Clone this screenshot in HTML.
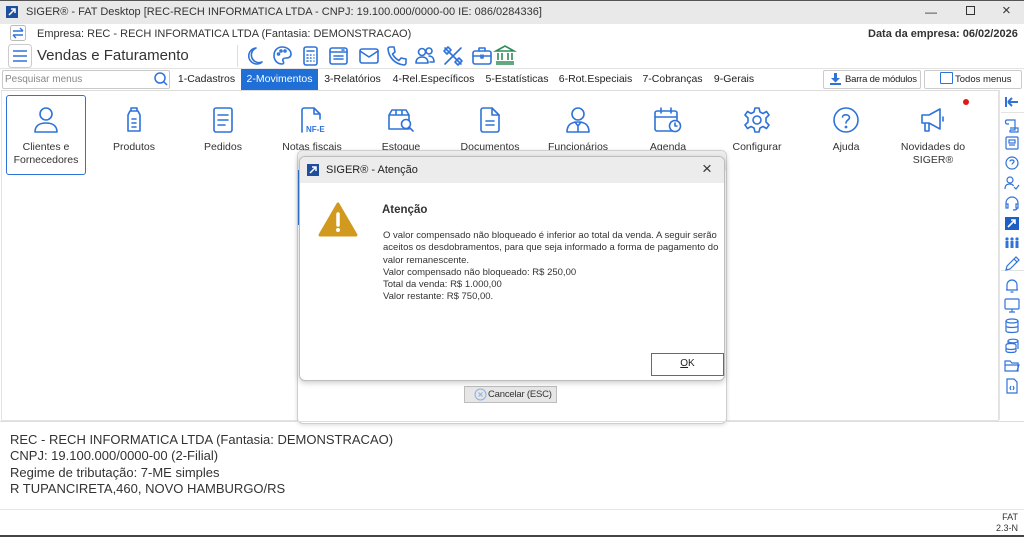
<!DOCTYPE html>
<html><head><meta charset="utf-8"><style>
*{box-sizing:border-box;margin:0;padding:0}
body{width:1024px;height:537px;overflow:hidden;background:#fff;font-family:"Liberation Sans","DejaVu Sans",sans-serif;color:#222;position:relative;font-size:11px}
.a{position:absolute;white-space:nowrap}
svg{overflow:visible}
.ic{fill:none;stroke:#2f73d9;stroke-width:1.6;stroke-linecap:round;stroke-linejoin:round}
.tab{position:absolute;top:69px;height:21px;line-height:21px;font-size:10.5px;color:#222;white-space:nowrap;text-align:center}
.mod{position:absolute;top:100px;width:80px;text-align:center;font-size:10.5px;color:#333;line-height:13px}
.mod svg{display:block;margin:0 auto 8px}
</style></head><body>
<div class="a" style="left:0;top:0;width:1024px;height:24px;background:#e9e9e9;border-top:1px solid #555"></div>
<div class="a" style="left:6px;top:6px;width:12px;height:12px;background:#1f4f9c"></div>
<svg class="a" style="left:8px;top:8px" width="8" height="8"><path d="M1 7L7 1M3 1H7V5" stroke="#fff" stroke-width="1.5" fill="none"/></svg>
<div class="a" style="left:26px;top:6px;font-size:11px;color:#333">SIGER® - FAT Desktop [REC-RECH INFORMATICA LTDA - CNPJ: 19.100.000/0000-00 IE: 086/0284336]</div>
<div class="a" style="left:925px;top:5px;font-size:12px;color:#333">—</div>
<div class="a" style="left:966px;top:6px;width:9px;height:9px;border:1px solid #333"></div>
<div class="a" style="left:1002px;top:2px;font-size:15px;color:#333">×</div>
<svg class="a" style="left:10px;top:25px" width="16" height="16"><rect x="0.5" y="0.5" width="15" height="15" rx="2" fill="#fff" stroke="#bbb"/><path d="M3 6H13M10 3L13 6M13 10H3M6 13L3 10" stroke="#2f73d9" stroke-width="1.4" fill="none"/></svg>
<div class="a" style="left:37px;top:28px;font-size:11px;color:#333">Empresa: REC - RECH INFORMATICA LTDA (Fantasia: DEMONSTRACAO)</div>
<div class="a" style="left:868px;top:28px;font-size:11px;font-weight:bold;color:#333">Data da empresa: 06/02/2026</div>
<svg class="a" style="left:8px;top:44px" width="24" height="24"><rect x="0.5" y="0.5" width="23" height="23" rx="3" fill="#fff" stroke="#ccc"/><path d="M5 7H19M5 12H19M5 17H19" stroke="#2f73d9" stroke-width="1.6"/></svg>
<div class="a" style="left:37px;top:47px;font-size:15px;color:#333">Vendas e Faturamento</div>
<div class="a" style="left:237px;top:45px;width:1px;height:22px;background:#ddd"></div>
<svg class="a ic" style="left:245px;top:46px" width="250" height="20">
<path d="M11 2A8 8 0 1 0 17 16A7 7 0 0 1 11 2Z"/>
<g transform="translate(28,0)"><path d="M9 1C4 1 1 5 1 9.5C1 14 4 18 9 18C11 18 11 16 10 15C9 13 11 12 13 12C16 12 18 11 18 8C18 4 14 1 9 1Z"/><circle cx="5.5" cy="8" r="1"/><circle cx="8" cy="5" r="1"/><circle cx="12" cy="5" r="1"/></g>
<g transform="translate(58,0)"><rect x="1" y="1" width="13" height="18" rx="2"/><path d="M4 5H11M4 9H5M7.5 9H8M11 9H11M4 12H5M7.5 12H8M11 12H11M4 15H5M7.5 15H8M11 15H11"/></g>
<g transform="translate(84,0)"><rect x="1" y="2" width="17" height="16" rx="2"/><path d="M1 6H18M5 10H14M5 13H14M13 4H15"/></g>
<g transform="translate(114,0)"><rect x="1" y="3" width="18" height="14" rx="2"/><path d="M1 5L10 11L19 5"/></g>
<g transform="translate(142,0)"><path d="M3 1L7 1L8 6L5.5 8C7 11 9 13 12 14.5L14 12L19 13L19 17C19 18 18 19 17 19C8 18 2 12 1 3C1 2 2 1 3 1Z"/></g>
<g transform="translate(170,0)"><circle cx="7" cy="6" r="3.5"/><path d="M1 17C1 13 3.5 11 7 11C10.5 11 13 13 13 17Z"/><circle cx="14" cy="5" r="3"/><path d="M14 10C17 10 19 12 19 16H15"/></g>
<g transform="translate(198,0)"><path d="M2 2L18 18M18 2L2 18"/><path d="M1 5L5 1L8 4L4 8ZM12 16L16 12L19 15L15 19Z"/></g>
<g transform="translate(227,0)"><rect x="1" y="5" width="18" height="13" rx="2"/><path d="M7 5V2H13V5M1 10H19M9 9V12H11V9"/></g>
</svg>
<svg class="a" style="left:495px;top:45px" width="20" height="20" fill="none" stroke="#2e8b57" stroke-width="1.6"><path d="M1 6L10 1L19 6ZM3 8V15M7 8V15M13 8V15M17 8V15M1 17H19M1 19H19"/></svg>
<div class="a" style="left:0;top:68px;width:1024px;height:1px;background:#e3e3e3"></div>
<div class="a" style="left:2px;top:70px;width:168px;height:19px;border:1px solid #c8c8c8;border-radius:2px;background:#fff"></div>
<div class="a" style="left:5px;top:74px;font-size:10px;color:#888">Pesquisar menus</div>
<svg class="a" style="left:154px;top:72px" width="14" height="14" fill="none" stroke="#2f73d9" stroke-width="1.5"><circle cx="6" cy="6" r="5"/><path d="M10 10L13 13"/></svg>
<div class="tab" style="left:172px;width:69px">1-Cadastros</div>
<div class="tab" style="left:241px;width:77px;background:#1f6fd6;color:#fff">2-Movimentos</div>
<div class="tab" style="left:318px;width:69px">3-Relatórios</div>
<div class="tab" style="left:387px;width:93px">4-Rel.Específicos</div>
<div class="tab" style="left:480px;width:74px">5-Estatísticas</div>
<div class="tab" style="left:554px;width:83px">6-Rot.Especiais</div>
<div class="tab" style="left:637px;width:71px">7-Cobranças</div>
<div class="tab" style="left:708px;width:52px">9-Gerais</div>
<div class="a" style="left:823px;top:70px;width:98px;height:19px;border:1px solid #ccc;border-radius:2px;font-size:9.5px;line-height:17px;padding-left:21px;color:#222;letter-spacing:-0.2px">Barra de módulos</div>
<svg class="a" style="left:830px;top:73px" width="11" height="12" fill="#2f73d9"><path d="M4 0H7V5H10L5.5 9.5L1 5H4ZM0 10H11V12H0Z"/></svg>
<div class="a" style="left:924px;top:70px;width:98px;height:19px;border:1px solid #ccc;border-radius:2px;font-size:9.5px;line-height:17px;padding-left:30px;color:#222">Todos menus</div>
<div class="a" style="left:940px;top:72px;width:13px;height:12px;border:1px solid #2f73d9;border-radius:1px"></div>
<div class="a" style="left:1px;top:90px;width:998px;height:331px;border:1px solid #e3e3e3;border-top:1px solid #ddd"></div>
<div class="a" style="left:6px;top:95px;width:80px;height:80px;border:1.5px solid #2f73d9;border-radius:3px"></div>
<div class="mod" style="left:6px;top:107px"><svg class="ic" width="24" height="26"><circle cx="12" cy="7" r="6"/><path d="M1 25C1 19 5 16 12 16C19 16 23 19 23 25Z"/></svg>Clientes e<br>Fornecedores</div>
<div class="mod" style="left:94px;top:107px"><svg class="ic" width="16" height="26"><path d="M5 1H11V4H5ZM4 4H12L14 8V24H2V8Z"/><path d="M6 12H10M6 16H10M6 20H10"/></svg>Produtos</div>
<div class="mod" style="left:183px;top:107px"><svg class="ic" width="20" height="26"><rect x="1" y="1" width="18" height="24" rx="2"/><path d="M5 8H15M5 13H15M5 18H12"/></svg>Pedidos</div>
<div class="mod" style="left:272px;top:107px"><svg class="ic" width="26" height="26"><path d="M3 25V3C3 2 4 1 5 1H15L21 7V12M15 1V7H21"/><text x="7" y="25" font-size="8" font-weight="bold" fill="#2f73d9" stroke="none" font-family="Liberation Sans">NF-E</text></svg>Notas fiscais</div>
<div class="mod" style="left:361px;top:107px"><svg class="ic" width="28" height="26"><path d="M2 8H22V22H2ZM2 8L5 3H19L22 8M9 3V8M15 3V8"/><circle cx="19" cy="17" r="4.5" fill="#fff"/><path d="M22 20L26 24"/></svg>Estoque</div>
<div class="mod" style="left:450px;top:107px"><svg class="ic" width="20" height="26"><path d="M1 3C1 2 2 1 3 1H12L19 8V23C19 24 18 25 17 25H3C2 25 1 24 1 23Z"/><path d="M12 1V8H19M6 14H14M6 18H14"/></svg>Documentos</div>
<div class="mod" style="left:538px;top:107px"><svg class="ic" width="26" height="26"><circle cx="13" cy="7" r="6"/><path d="M2 25C2 18 6 15 13 15C20 15 24 18 24 25ZM10 15L13 19L16 15M13 19V25"/></svg>Funcionários</div>
<div class="mod" style="left:628px;top:107px"><svg class="ic" width="28" height="26"><rect x="1" y="4" width="22" height="20" rx="2"/><path d="M1 10H23M7 1V6M17 1V6"/><circle cx="21" cy="19" r="5.5" fill="#fff"/><path d="M21 16V19H23"/></svg>Agenda</div>
<div class="mod" style="left:717px;top:107px"><svg class="ic" width="26" height="26"><path d="M11 1H15L16 5L19 6.5L22.5 4.5L25 8L22 11V15L25 18L22.5 21.5L19 19.5L16 21L15 25H11L10 21L7 19.5L3.5 21.5L1 18L4 15V11L1 8L3.5 4.5L7 6.5L10 5Z"/><circle cx="13" cy="13" r="4"/></svg>Configurar</div>
<div class="mod" style="left:806px;top:107px"><svg class="ic" width="26" height="26"><circle cx="13" cy="13" r="12"/><path d="M9.5 10C9.5 7 16.5 7 16.5 10.5C16.5 13 13 13 13 16"/><circle cx="13" cy="20" r="0.6"/></svg>Ajuda</div>
<div class="mod" style="left:893px;top:107px"><svg class="ic" width="26" height="26"><path d="M2 8H9L20 2V22L9 16H2ZM5 16V24H9V16M23 10V14"/></svg>Novidades do<br>SIGER®</div>
<div class="a" style="left:963px;top:99px;width:6px;height:6px;border-radius:50%;background:#e01818"></div>
<div class="a" style="left:999px;top:90px;width:1px;height:330px;background:#e3e3e3"></div>
<div class="a" style="left:1001px;top:112px;width:23px;height:1px;background:#e3e3e3"></div>
<div class="a" style="left:1001px;top:270px;width:23px;height:1px;background:#e3e3e3"></div>
<svg class="a" style="left:1004px;top:94px" width="16" height="310" fill="none" stroke="#2f73d9" stroke-width="1.2">
<path d="M2 3V13M4 8H14M4 8L8 4M4 8L8 12" stroke-width="2"/>
<g transform="translate(0,24)"><path d="M3 2H11V12H6M3 2C1 2 1 6 3 6H5M6 12V14H14V10H6"/></g>
<g transform="translate(0,42)"><rect x="2" y="1" width="12" height="12" rx="1"/><rect x="5" y="4" width="6" height="3"/><path d="M5 9H11"/></g>
<g transform="translate(0,62)"><circle cx="8" cy="7" r="6"/><path d="M6 5.5C6 3.5 10 3.5 10 5.5C10 7 8 7 8 8.5M8 10.5V10.6"/></g>
<g transform="translate(0,82)"><circle cx="6" cy="4" r="3"/><path d="M1 13C1 9 3 8 6 8C8 8 9 9 9.5 10M10 11L12 13L15 9"/></g>
<g transform="translate(0,102)"><path d="M2 9V7A6 6 0 0 1 14 7V9M2 8H4V12H2ZM12 8H14V12H12ZM13 12C13 14 11 14 9 14"/></g>
<g transform="translate(0,122)"><rect x="1" y="1" width="14" height="13" fill="#1f5fc4" stroke="none"/><path d="M4 11L11 4M7 4H11V8" stroke="#fff" stroke-width="1.6"/></g>
<g transform="translate(0,142)" fill="#2f73d9" stroke="none"><circle cx="3" cy="3" r="1.6"/><circle cx="8" cy="3" r="1.6"/><circle cx="13" cy="3" r="1.6"/><rect x="1.5" y="5" width="3" height="7"/><rect x="6.5" y="5" width="3" height="7"/><rect x="11.5" y="5" width="3" height="7"/></g>
<g transform="translate(0,162)"><path d="M2 14L3 10L12 1L15 4L6 13ZM10 3L13 6"/></g>
<g transform="translate(0,184)"><path d="M3 12V7A5 5 0 0 1 13 7V12H3ZM2 12H14M6.5 14H9.5"/></g>
<g transform="translate(0,204)"><rect x="1" y="1" width="14" height="10" rx="1"/><path d="M8 11V14M5 14H11"/></g>
<g transform="translate(0,224)"><ellipse cx="8" cy="3" rx="6" ry="2"/><path d="M2 3V13C2 15 14 15 14 13V3M2 8C2 10 14 10 14 8"/></g>
<g transform="translate(0,244)"><ellipse cx="9" cy="3" rx="5" ry="1.8"/><path d="M4 3V6M14 3V11M2 7C2 5 12 5 12 7V13C12 15 2 15 2 13ZM2 10C2 12 12 12 12 10"/></g>
<g transform="translate(0,264)"><path d="M1 3H6L8 5H14V13H1Z"/><path d="M1 7H15L13 13"/></g>
<g transform="translate(0,284)"><path d="M3 1H10L13 4V15H3Z"/><path d="M7 8L6 10L7 12M9 8L10 10L9 12"/></g>
</svg>
<div class="a" style="left:297px;top:150px;width:430px;height:274px;background:#fff;border:1px solid #cfcfcf;border-radius:6px;box-shadow:0 1px 4px rgba(0,0,0,.15)"></div>
<div class="a" style="left:298px;top:151px;width:428px;height:20px;background:#ececec;border-radius:6px 6px 0 0"></div>
<div class="a" style="left:298px;top:170px;width:2px;height:55px;background:#2f73d9"></div>
<div class="a" style="left:464px;top:386px;width:93px;height:17px;background:#e6e6e6;border:1px solid #bdbdbd;font-size:9.5px;line-height:15px;padding-left:23px;color:#333;letter-spacing:-0.2px">Cancelar (ESC)</div>
<svg class="a" style="left:474px;top:388px" width="13" height="13" fill="none" stroke="#8ab0e6" stroke-width="1"><circle cx="6.5" cy="6.5" r="5.5"/><path d="M4.5 4.5L8.5 8.5M8.5 4.5L4.5 8.5"/></svg>
<div class="a" style="left:299px;top:156px;width:426px;height:225px;background:#fff;border:1px solid #bdbdbd;border-radius:6px;box-shadow:0 2px 6px rgba(0,0,0,.2);overflow:hidden">
  <div style="height:26px;background:#ececec;position:relative">
    <div class="a" style="left:7px;top:7px;width:12px;height:12px;background:#1f4f9c"></div>
    <svg class="a" style="left:9px;top:9px" width="8" height="8"><path d="M1 7L7 1M3 1H7V5" stroke="#fff" stroke-width="1.5" fill="none"/></svg>
    <div class="a" style="left:26px;top:7px;font-size:11px;color:#222">SIGER® - Atenção</div>
    <div class="a" style="left:402px;top:2px;font-size:17px;color:#333">×</div>
  </div>
  <svg class="a" style="left:18px;top:45px" width="40" height="36"><path d="M20 2L38 33H2Z" fill="#d19a1e" stroke="#d19a1e" stroke-width="3" stroke-linejoin="round"/><path d="M20 12V23" stroke="#fff" stroke-width="3.5" stroke-linecap="round"/><circle cx="20" cy="28" r="2" fill="#fff"/></svg>
  <div class="a" style="left:82px;top:47px;font-size:11.5px;font-weight:bold;color:#333">Atenção</div>
  <div class="a" style="left:83px;top:73px;font-size:9.5px;line-height:12.3px;color:#333;width:340px;white-space:normal">O valor compensado não bloqueado é inferior ao total da venda. A seguir serão aceitos os desdobramentos, para que seja informado a forma de pagamento do valor remanescente.<br>Valor compensado não bloqueado: R$ 250,00<br>Total da venda: R$ 1.000,00<br>Valor restante: R$ 750,00.</div>
  <div class="a" style="left:351px;top:196px;width:73px;height:23px;border:1.5px solid #2f73d9;background:#fff;font-size:10px;text-align:center;line-height:20px;color:#222"><u>O</u>K</div>
</div>
<div class="a" style="left:0;top:421px;width:1024px;height:1px;background:#ddd"></div>
<div class="a" style="left:10px;top:432px;font-size:13px;line-height:16.3px;color:#333">REC - RECH INFORMATICA LTDA (Fantasia: DEMONSTRACAO)<br>CNPJ: 19.100.000/0000-00 (2-Filial)<br>Regime de tributação: 7-ME simples<br>R TUPANCIRETA,460, NOVO HAMBURGO/RS</div>
<div class="a" style="left:0;top:509px;width:1024px;height:1px;background:#e5e5e5"></div>
<div class="a" style="left:990px;top:512px;font-size:9px;line-height:11px;text-align:right;width:28px;color:#333">FAT<br>2.3-N</div>
<div class="a" style="left:0;top:535px;width:1024px;height:2px;background:#444"></div>
</body></html>
